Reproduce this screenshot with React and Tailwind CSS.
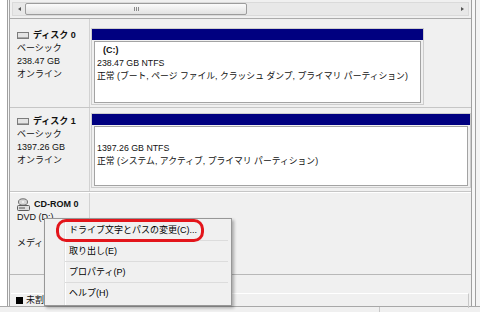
import React from 'react'

function DiskIcon() {
  return (
    <svg width="12" height="7" viewBox="0 0 12 7" className="shrink-0">
      <rect x="0.5" y="0.5" width="11" height="6" fill="#e4e4e4" stroke="#7c7c7c" />
      <rect x="1" y="5" width="10" height="1" fill="#a8a8a8" />
    </svg>
  )
}

function CdIcon() {
  return (
    <svg width="13" height="13" viewBox="0 0 13 13" className="shrink-0">
      <ellipse cx="6" cy="4" rx="4.5" ry="3.2" fill="#d6d6d6" stroke="#6c6c6c" />
      <ellipse cx="6" cy="4" rx="1.2" ry="0.8" fill="#fff" />
      <rect x="0.5" y="7.5" width="12" height="5" rx="1" fill="#dedede" stroke="#5e5e5e" />
      <rect x="2" y="9.5" width="6" height="1" fill="#555" />
    </svg>
  )
}

function DiskLabel({ icon, title, lines, pt }) {
  return (
    <div className={`w-[80px] shrink-0 border-r border-[#d2d2d2] pl-[7px] leading-[13px] ${pt}`}>
      <div className="flex items-center gap-[4px] font-bold">
        {icon}
        <span>{title}</span>
      </div>
      {lines.map((l, i) => (
        <div key={i} className="h-[13px] whitespace-nowrap">{l}</div>
      ))}
    </div>
  )
}

function Partition({ lines, h }) {
  return (
    <div className="border border-[#cdcdcd] bg-[#f0f0f0]">
      <div className="h-[11px] bg-[#000080]" />
      <div className={`mx-[2px] mt-[1px] mb-[1px] border border-[#a3a3a3] bg-white pt-[2px] pl-[2px] leading-[13px] ${h}`}>
        {lines.map((l, i) => (
          <div key={i} className={`h-[13px] whitespace-nowrap ${i === 0 ? 'font-bold pl-[6px]' : 'text-[8.8px]'}`}>{l}</div>
        ))}
      </div>
    </div>
  )
}

export default function App() {
  const menuItems = ['ドライブ文字とパスの変更(C)...', '取り出し(E)', 'プロパティ(P)', 'ヘルプ(H)']

  return (
    <div className="relative w-[480px] h-[312px] overflow-hidden bg-[#f0f0f0] text-[9px] text-[#111] font-['Liberation_Sans','Noto_Sans_CJK_JP',sans-serif]">
      <div className="flex h-[306px]">
        <div className="w-[7px] bg-white" />
        <div className="w-[465px] flex border-l border-[#a0a0a0]">
          <div className="w-px bg-[#f8f8f8]" />
          <div className="flex-1 flex flex-col border-l border-[#a6a6a6] border-r border-r-[#a0a0a0]">

            {/* horizontal scrollbar */}
            <div className="h-[19px] shrink-0 border-b border-[#ababab] pt-[2px] px-[2px]">
              <div className="h-[14px] flex items-center border border-[#dadada] bg-[#e8e8e8]">
                <div className="w-[12px] flex justify-center">
                  <div className="w-0 h-0 border-y-[2.5px] border-y-transparent border-r-[3px] border-r-[#555]" />
                </div>
                <div className="w-[222px] h-[12px] rounded-[2px] border border-[#9c9c9c] bg-gradient-to-b from-[#fbfbfb] to-[#e2e2e2] flex items-center justify-center gap-[1px]">
                  <div className="w-px h-[4px] bg-[#8a8a8a]" />
                  <div className="w-px h-[4px] bg-[#8a8a8a]" />
                  <div className="w-px h-[4px] bg-[#8a8a8a]" />
                </div>
                <div className="flex-1" />
                <div className="w-[12px] flex justify-center">
                  <div className="w-0 h-0 border-y-[2.5px] border-y-transparent border-l-[3px] border-l-[#555]" />
                </div>
              </div>
            </div>

            {/* ディスク 0 */}
            <div className="h-[89px] shrink-0 flex border-b border-[#c6c6c6]">
              <DiskLabel icon={<DiskIcon />} title="ディスク 0" lines={['ベーシック', '238.47 GB', 'オンライン']} pt="pt-[10px]" />
              <div className="w-[334px] pl-px pt-[9px]">
                <Partition
                  h="h-[62px]"
                  lines={['(C:)', '238.47 GB NTFS', '正常 (ブート, ページ ファイル, クラッシュ ダンプ, プライマリ パーティション)']}
                />
              </div>
            </div>

            {/* ディスク 1 */}
            <div className="h-[84px] shrink-0 flex border-b border-[#c6c6c6]">
              <DiskLabel icon={<DiskIcon />} title="ディスク 1" lines={['ベーシック', '1397.26 GB', 'オンライン']} pt="pt-[7px]" />
              <div className="flex-1 pl-px pt-[5px]">
                <Partition
                  h="h-[60px]"
                  lines={['', '1397.26 GB NTFS', '正常 (システム, アクティブ, プライマリ パーティション)']}
                />
              </div>
            </div>

            {/* CD-ROM 0 */}
            <div className="h-[83px] shrink-0 flex border-t border-white border-b border-b-[#b8b8b8]">
              <DiskLabel icon={<CdIcon />} title="CD-ROM 0" lines={['DVD (D:)', '', 'メディアなし']} pt="pt-[5px]" />
              <div className="flex-1" />
            </div>

            <div className="h-[18px] shrink-0 flex">
              <div className="w-[80px] border-r border-[#d2d2d2]" />
              <div className="flex-1" />
            </div>

            {/* legend (rest of it lies under the menu) */}
            <div className="flex-1 mx-[1px] mr-[2px] border-t border-white border-r border-r-[#c8c8c8] flex items-center pl-[5px]">
              <div className="w-[34px] overflow-hidden flex items-center gap-[3px] whitespace-nowrap">
                <div className="w-[7px] h-[7px] shrink-0 bg-black" />
                <span>未割</span>
              </div>
            </div>
          </div>
        </div>
        <div className="w-[3px] bg-[#f7f7f7]" />
        <div className="flex-1 border-l border-[#a0a0a0] bg-[#f4f4f4]" />
      </div>

      {/* status bar */}
      <div className="h-[6px] border-t border-[#a8a8a8] bg-[#f0f0f0] flex">
        <div className="w-[379px]" />
        <div className="w-px bg-[#c8c8c8]" />
      </div>

      {/* context menu */}
      <div className="absolute left-[44px] top-[218px] w-[188px] border border-[#979797] bg-[#f0f0f0] py-px shadow-[2px_2px_3px_rgba(0,0,0,0.3)]">
        <div className="absolute left-[19px] top-0 bottom-0 w-px bg-[#e2e3e3]" />
        <div className="absolute left-[20px] top-0 bottom-0 w-px bg-white" />
        {menuItems.map((t, i) => (
          <div key={i} className="relative h-[21px] flex items-center pl-[24px] text-[9px] text-black whitespace-nowrap">
            {t}
            {i < menuItems.length - 1 && (
              <div className="absolute left-[20px] right-[3px] bottom-0 h-px bg-[#dcdcdc]" />
            )}
          </div>
        ))}
      </div>

      {/* red highlight */}
      <div className="absolute left-[56px] top-[219px] w-[148px] h-[23px] border-[3px] border-[#e3151b] rounded-[10px]" />
    </div>
  )
}
